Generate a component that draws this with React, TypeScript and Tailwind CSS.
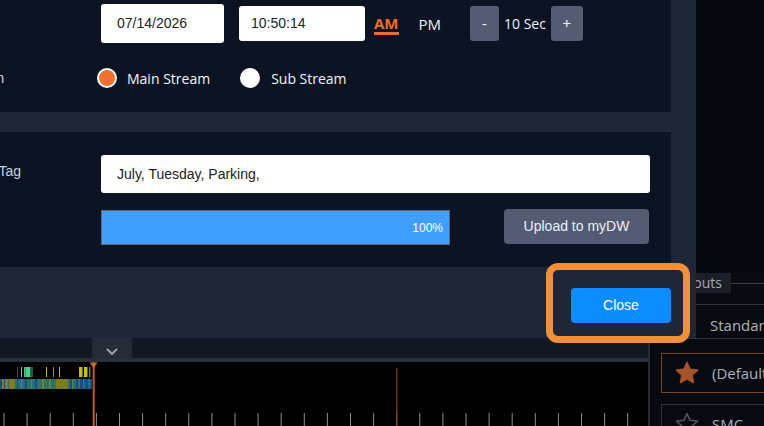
import React from "react";

const row1Bars: [number, number, string][] = [
  [17, 1, "#2848a0"],
  [21, 1, "#b8b820"],
  [24, 1.5, "#50c080"],
  [25.5, 5, "#4ccf8a"],
  [31.5, 1, "#40b080"],
  [46, 1, "#b8b820"],
  [53, 1, "#30a0b0"],
  [59, 1, "#b8b820"],
  [79, 3.5, "#c2bc22"],
  [84, 3.5, "#c2bc22"],
  [89.3, 1, "#b8b820"],
];

const row2Segs: [number, number, string][] = [
  [0, 2, "#1c4a8a"], [2, 2, "#7d7d1c"], [4, 1, "#1c4a8a"], [5, 3, "#7d7d1c"], [8, 1, "#2a6a6a"],
  [9, 6, "#7d7d1c"], [15, 2, "#1e7282"], [17, 1, "#1c4a8a"], [18, 3, "#1e7282"], [21, 1, "#7d7d1c"],
  [22, 3, "#1e7282"], [25, 2, "#1c4a8a"], [27, 2, "#2f7a55"], [29, 2, "#1e7282"], [31, 1, "#7d7d1c"],
  [32, 3, "#1e7282"], [35, 2, "#1c4a8a"], [37, 3, "#2f7a55"], [40, 2, "#1e7282"], [42, 2, "#7d7d1c"],
  [44, 3, "#2f7a55"], [47, 2, "#1e7282"], [49, 2, "#7d7d1c"], [51, 3, "#1e7282"], [54, 2, "#2f7a55"],
  [56, 12, "#7d7d1c"], [68, 2, "#1e7282"], [70, 2, "#1c4a8a"], [72, 1, "#7d7d1c"], [73, 3, "#1e7282"],
  [76, 2, "#1c4a8a"], [78, 2, "#2f7a55"], [80, 3, "#1c4a8a"], [83, 2, "#1e7282"], [85, 3, "#1c4a8a"],
  [88, 2, "#1e7282"], [90, 2, "#1c4a8a"],
];

const ticks = Array.from({ length: 28 }, (_, i) => 4 + 23.1 * i);

function Star({ filled }: { filled: boolean }) {
  return (
    <svg width="24" height="24" viewBox="0 0 24 24">
      <polygon
        points="12,1.5 15.1,8.3 22.5,9.1 17,14.1 18.5,21.5 12,17.8 5.5,21.5 7,14.1 1.5,9.1 8.9,8.3"
        fill={filled ? "#a5532a" : "none"}
        stroke={filled ? "#a5532a" : "#4c525b"}
        strokeWidth="1.6"
        strokeLinejoin="round"
      />
    </svg>
  );
}

export default function App() {
  return (
    <div className="relative flex h-[426px] w-[764px] overflow-hidden bg-[#05080f]">
      {/* main page column */}
      <div className="flex w-[648px] shrink-0 flex-col">
        <div className="h-[338px] shrink-0 bg-[#05080f]" />
        <div className="flex h-[20px] shrink-0 bg-[#121822]">
          <div className="ml-[92px] flex h-[20px] w-[40px] items-start justify-center bg-[#262b36] pt-[10px]">
            <svg width="12" height="7" viewBox="0 0 12 7">
              <polyline points="1,1 6,6 11,1" fill="none" stroke="#9ba1aa" strokeWidth="2" />
            </svg>
          </div>
        </div>
        <div className="h-[4px] shrink-0 bg-[#2a303a]" />
        <div className="relative flex-1 bg-black">
          <svg className="absolute inset-0 overflow-visible" width="648" height="64" viewBox="0 0 648 64">
            {row1Bars.map(([x, w, c], i) => (
              <rect key={"a" + i} x={x} y={5} width={w} height={10} fill={c} />
            ))}
            {row2Segs.map(([x, w, c], i) => (
              <rect key={"b" + i} x={x} y={17} width={w} height={10} fill={c} />
            ))}
            {ticks.map((x, i) => (
              <line key={"t" + i} x1={x} x2={x} y1={51} y2={64} stroke="#8d8f94" strokeWidth="1" />
            ))}
            <line x1={396.8} x2={396.8} y1={6} y2={64} stroke="#7a3f1e" strokeWidth="1.3" />
            <rect x={92.7} y={0} width={2} height={64} fill="#b5602b" />
            <polygon points="89.5,0.5 97.5,0.5 93.7,6.5" fill="#c0652c" />
          </svg>
        </div>
      </div>
      <div className="w-[2px] shrink-0 bg-[#262a32]" />
      {/* sidebar */}
      <div className="flex flex-1 flex-col overflow-hidden bg-[#070a11] font-['Open_Sans',sans-serif] text-[15px] text-[#aeb2b9]">
        <div className="h-[273px] shrink-0 bg-[#05080f]" />
        <div className="flex h-[20px] shrink-0 items-center">
          <div className="ml-[10px] flex h-[20px] w-[71px] shrink-0 items-center justify-end overflow-hidden bg-[#1a1f29] pr-[9px] text-[14px] leading-[20px] text-[#a4a8af]">
            <span className="whitespace-nowrap">Layouts</span>
          </div>
          <div className="h-px flex-1 bg-[#3a3f48]" />
        </div>
        <div className="ml-[11px] mt-[11px] flex h-[35px] w-[200px] shrink-0 items-center border-y border-[#30353d] pl-[49px] pt-[8px]">
          <span className="whitespace-nowrap">Standard</span>
        </div>
        <div className="ml-[11px] mt-[14px] flex h-[40px] w-[200px] shrink-0 items-center border border-[#7a4226] pl-[13px]">
          <Star filled />
          <span className="ml-[13px] whitespace-nowrap">(Default)</span>
        </div>
        <div className="ml-[11px] mt-[11px] flex h-[40px] w-[200px] shrink-0 items-center border border-[#30353d] pl-[13px]">
          <Star filled={false} />
          <span className="ml-[13px] whitespace-nowrap">SMC</span>
        </div>
      </div>

      {/* modal dialog */}
      <div className="absolute left-0 top-0 flex h-[338px] w-[696px] flex-col bg-[#1e2637]">
        <section className="h-[112px] w-[671px] shrink-0 overflow-hidden bg-[#0c1424] pt-[4px]">
          <div className="flex h-[39px] items-center">
            <div className="w-[101px] shrink-0" />
            <div className="flex h-[39px] w-[123px] items-center rounded-[3px] bg-white pl-[16px] font-['Liberation_Sans',Arial,sans-serif] text-[14px] text-[#222]">
              07/14/2026
            </div>
            <div className="ml-[15px] flex h-[35px] w-[126px] items-center rounded-[3px] bg-white pl-[12px] font-['Liberation_Sans',Arial,sans-serif] text-[14px] text-[#222]">
              10:50:14
            </div>
            <span className="ml-[9px] mt-[2px] border-b-[3px] border-[#e8702a] font-['Open_Sans',sans-serif] text-[15px] font-bold leading-[18px] text-[#e8702a]">
              AM
            </span>
            <span className="ml-[20px] font-['Open_Sans',sans-serif] text-[15px] leading-[18px] text-[#eef0f3]">PM</span>
            <div className="ml-[29px] flex h-[35px] w-[29px] items-center justify-center rounded-[3px] bg-[#535c73] font-['Open_Sans',sans-serif] text-[15px] text-white">
              -
            </div>
            <span className="ml-[5px] font-['Open_Sans',sans-serif] text-[14px] text-[#eef0f3]">10 Sec</span>
            <div className="ml-[5px] flex h-[35px] w-[32px] items-center justify-center rounded-[3px] bg-[#535c73] font-['Open_Sans',sans-serif] text-[15px] text-white">
              +
            </div>
          </div>
          <div className="-ml-[41px] mt-[25px] flex h-[20px] items-center">
            <span className="w-[138px] shrink-0 font-['Liberation_Sans',Arial,sans-serif] text-[14px] text-[#d4d8de]">Stream</span>
            <span className="h-[20px] w-[20px] rounded-full border-2 border-white bg-[#f07030]" />
            <span className="ml-[10px] font-['Open_Sans',sans-serif] text-[14px] text-[#f2f4f6]">Main Stream</span>
            <span className="ml-[30px] h-[20px] w-[20px] rounded-full bg-white" />
            <span className="ml-[11px] font-['Open_Sans',sans-serif] text-[14px] text-[#f2f4f6]">Sub Stream</span>
          </div>
        </section>
        <section className="mt-[20px] h-[135px] w-[671px] shrink-0 bg-[#0c1424] pt-[23px]">
          <div className="-ml-[41px] flex">
            <span className="w-[142px] shrink-0 pt-[6px] font-['Liberation_Sans',Arial,sans-serif] text-[14px] leading-[20px] text-[#cdd1d8]">
              Event Tag
            </span>
            <div className="flex h-[38px] w-[549px] items-center rounded-[3px] bg-white pl-[16px] font-['Liberation_Sans',Arial,sans-serif] text-[14px] text-[#222]">
              July, Tuesday, Parking,
            </div>
          </div>
          <div className="ml-[101px] mt-[17px] flex items-start">
            <div className="flex h-[35px] w-[349px] items-center justify-end border border-[#5b6579] bg-[#409eff] pr-[6px] font-['Liberation_Sans',Arial,sans-serif] text-[12px] text-white">
              100%
            </div>
            <div className="-mt-px ml-[54px] flex h-[35px] w-[145px] items-center justify-center rounded-[4px] bg-[#535c73] font-['Liberation_Sans',Arial,sans-serif] text-[14px] text-[#eceef2]">
              Upload to myDW
            </div>
          </div>
        </section>
        <footer className="flex flex-1 items-start justify-end pr-[25px] pt-[21px]">
          <div className="flex h-[35px] w-[100px] items-center justify-center rounded-[4px] bg-[#0c8cff] font-['Liberation_Sans',Arial,sans-serif] text-[14px] text-white">
            Close
          </div>
        </footer>
      </div>

      {/* highlight callout */}
      <div className="absolute left-[546px] top-[263px] h-[80px] w-[144px] rounded-[12px] border-[7px] border-[#f0913a]" />
    </div>
  );
}
